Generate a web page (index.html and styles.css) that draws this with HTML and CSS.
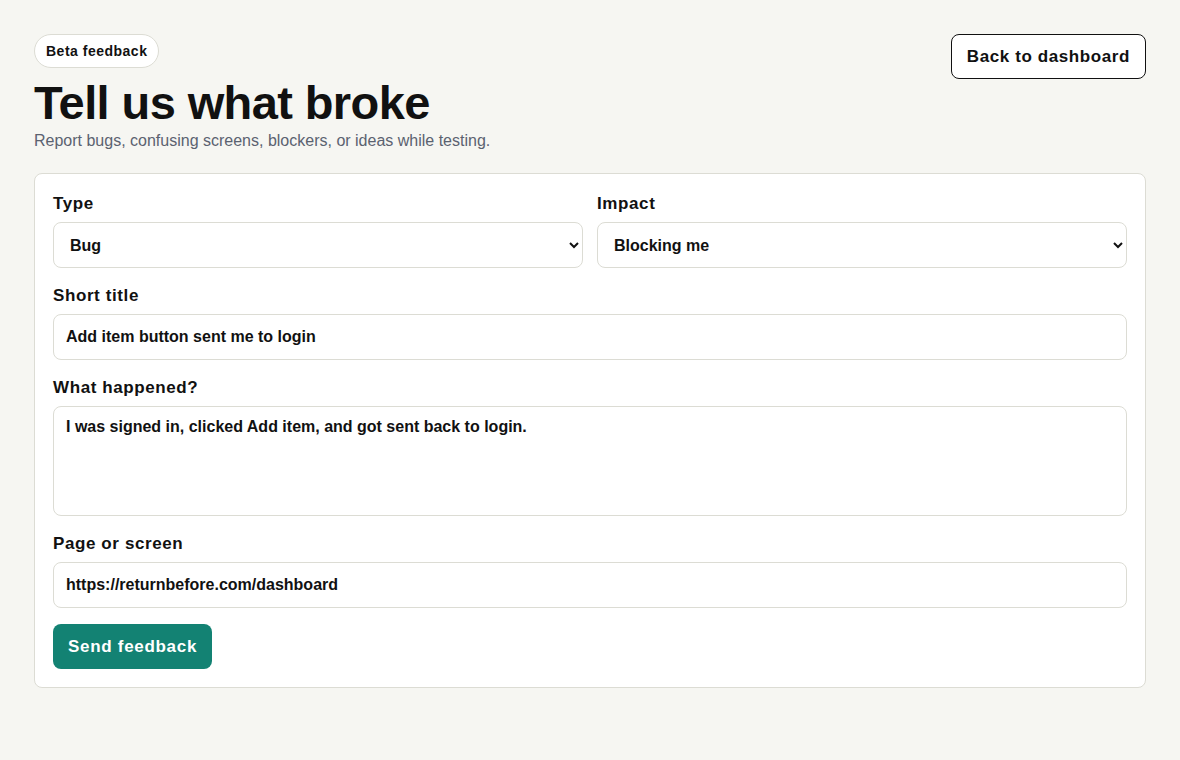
FILE: index.html
```html
<!DOCTYPE html>
<html lang="en">
<head>
    <meta charset="UTF-8">
    <meta name="viewport" content="width=device-width, initial-scale=1.0">
    <link rel="stylesheet" href="styles.css">
    <title>Beta feedback</title>
</head>
<body>
    <div class="page">
        <div class="page-header">
            <div class="header-text">
                <span class="pill">Beta feedback</span>
                <h1>Tell us what broke</h1>
                <p class="subtitle">Report bugs, confusing screens, blockers, or ideas while testing.</p>
            </div>
            <button class="back-button">Back to dashboard</button>
        </div>

        <form class="feedback-card">
            <div class="field-row">
                <div class="field">
                    <label for="type">Type</label>
                    <select id="type">
                        <option>Bug</option>
                        <option>Confusing screen</option>
                        <option>Idea</option>
                    </select>
                </div>
                <div class="field">
                    <label for="impact">Impact</label>
                    <select id="impact">
                        <option>Blocking me</option>
                        <option>Annoying</option>
                        <option>Minor</option>
                    </select>
                </div>
            </div>
            <div class="field">
                <label for="title">Short title</label>
                <input type="text" id="title" value="Add item button sent me to login">
            </div>
            <div class="field">
                <label for="details">What happened?</label>
                <textarea id="details">I was signed in, clicked Add item, and got sent back to login.</textarea>
            </div>
            <div class="field">
                <label for="page">Page or screen</label>
                <input type="text" id="page" value="https://returnbefore.com/dashboard">
            </div>
            <div>
                <button type="button" class="send-button">Send feedback</button>
            </div>
        </form>
    </div>
</body>
</html>
```

FILE: styles.css
```css
body {
    font-family: "Liberation Sans", Arial, sans-serif;
    margin: 0;
    padding: 0;
    background-color: #f6f6f2;
    color: #111;
}

.page {
    padding: 34px;
}

.page-header {
    display: flex;
    justify-content: space-between;
    align-items: flex-start;
}

.pill {
    display: inline-block;
    padding: 0 11px;
    height: 32px;
    line-height: 32px;
    border: 1px solid #dcdcd4;
    border-radius: 17px;
    background-color: #fff;
    font-size: 14px;
    font-weight: bold;
    letter-spacing: 0.5px;
}

h1 {
    margin: 9px 0 0;
    font-size: 47px;
    line-height: 52px;
    letter-spacing: -0.6px;
}

.subtitle {
    margin: 0;
    font-size: 16px;
    line-height: 24px;
    color: #5b6270;
}

.back-button {
    padding: 1px 15px 0;
    height: 45px;
    background-color: #fff;
    border: 1px solid #111;
    border-radius: 8px;
    font-family: inherit;
    font-size: 17px;
    font-weight: bold;
    color: #111;
    letter-spacing: 0.6px;
    cursor: pointer;
}

.feedback-card {
    margin-top: 20px;
    padding: 18px;
    background-color: #fff;
    border: 1px solid #dcdcd4;
    border-radius: 8px;
    display: flex;
    flex-direction: column;
    gap: 16px;
}

.field-row {
    display: grid;
    grid-template-columns: 1fr 1fr;
    gap: 14px;
}

.field {
    display: flex;
    flex-direction: column;
}

.field label {
    font-size: 17px;
    font-weight: bold;
    line-height: 24px;
    letter-spacing: 0.6px;
    margin-bottom: 6px;
}

.field input,
.field select,
.field textarea {
    box-sizing: border-box;
    width: 100%;
    padding: 0 12px;
    border: 1px solid #dcdcd4;
    border-radius: 8px;
    background-color: #fff;
    font-family: inherit;
    font-size: 16px;
    font-weight: bold;
    color: #111;
}

.field input,
.field select {
    height: 46px;
}

.field textarea {
    height: 110px;
    padding: 10px 12px;
    resize: none;
    line-height: 20px;
}

.send-button {
    height: 45px;
    padding: 1px 15px 0;
    background-color: #138273;
    color: #fff;
    border: none;
    border-radius: 8px;
    font-family: inherit;
    font-size: 17px;
    font-weight: bold;
    letter-spacing: 0.7px;
    cursor: pointer;
}
```
